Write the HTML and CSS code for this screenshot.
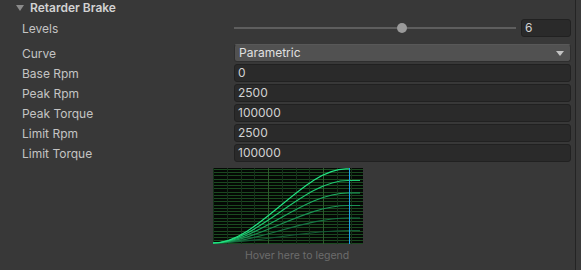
FILE: index.html
```html
<!DOCTYPE html>
<html lang="en">
<head>
    <meta charset="UTF-8">
    <meta name="viewport" content="width=device-width, initial-scale=1.0">
    <title>Retarder Brake</title>
    <link rel="stylesheet" href="styles.css">
</head>
<body>
    <div class="inspector">
        <div class="panel">
            <div class="foldout"><span class="arrow"></span>Retarder Brake</div>

            <div class="row row-levels">
                <label>Levels</label>
                <div class="value">
                    <div class="slider">
                        <div class="track"></div>
                        <div class="thumb"></div>
                    </div>
                    <div class="field num">6</div>
                </div>
            </div>

            <div class="row row-curve">
                <label>Curve</label>
                <div class="value">
                    <div class="dropdown">Parametric<span class="caret"></span></div>
                </div>
            </div>

            <div class="fields">
                <div class="row"><label>Base Rpm</label><div class="value"><div class="field">0</div></div></div>
                <div class="row"><label>Peak Rpm</label><div class="value"><div class="field">2500</div></div></div>
                <div class="row"><label>Peak Torque</label><div class="value"><div class="field">100000</div></div></div>
                <div class="row"><label>Limit Rpm</label><div class="value"><div class="field">2500</div></div></div>
                <div class="row"><label>Limit Torque</label><div class="value"><div class="field">100000</div></div></div>
            </div>

            <div class="graph-wrap">
                <svg class="graph" width="150" height="76" viewBox="0 0 150 76">
                    <rect width="150" height="76" fill="#050805"/>
                    <!-- torque grid -->
                    <g stroke="#1b4a20" stroke-width="1">
                        <path d="M0 1.5H150M0 4.5H150M0 7.5H150M0 11.5H150M0 14.5H150M0 17.5H150M0 20.5H150M0 24.5H150M0 27.5H150M0 30.5H150M0 33.5H150M0 37.5H150M0 40.5H150M0 43.5H150M0 46.5H150M0 50.5H150M0 53.5H150M0 56.5H150M0 59.5H150M0 63.5H150M0 66.5H150M0 69.5H150M0 72.5H150M0 75.5H150"/>
                    </g>
                    <!-- rpm grid -->
                    <g stroke="#16301a" stroke-width="1">
                        <path d="M0.5 0V76M14.5 0V76M28.5 0V76M41.5 0V76M69.5 0V76M83.5 0V76M96.5 0V76M124.5 0V76M138.5 0V76"/>
                    </g>
                    <g stroke="#2d5a2c" stroke-width="1">
                        <path d="M55.5 0V76M110.5 0V76"/>
                    </g>
                    <!-- one curve per level -->
                    <g fill="none" stroke-width="1.2">
                        <path stroke="#145a36" d="M0 75 C45 75 90 62.5 135 62.5 L147 62.5"/>
                        <path stroke="#177444" d="M0 75 C45 75 90 50 135 50 L147 50"/>
                        <path stroke="#1a9153" d="M0 75 C45 75 90 37.5 135 37.5 L147 37.5"/>
                        <path stroke="#1cad62" d="M0 75 C45 75 90 25 135 25 L147 25"/>
                        <path stroke="#1ecb72" d="M0 75 C45 75 90 12.5 135 12.5 L147 12.5"/>
                        <path stroke="#22e584" d="M0 75 C45 75 90 0.8 133 0.8 L136 0.8"/>
                    </g>
                    <path d="M136.5 0V76" stroke="#1e9ee8" stroke-width="1"/>
                </svg>
                <div class="caption">Hover here to legend</div>
            </div>
        </div>
        <div class="scrollbar"></div>
    </div>
</body>
</html>
```

FILE: styles.css
```css
html, body {
    margin: 0;
    padding: 0;
    background-color: #383838;
}
body {
    font-family: Inter, "Noto Sans", sans-serif;
    font-size: 12px;
    color: #c4c4c4;
    height: 270px;
    overflow: hidden;
}
.inspector {
    display: flex;
    height: 270px;
}
.panel {
    flex: 1;
    padding: 0 4px 0 22px;
}
.scrollbar {
    width: 5px;
    background-color: #3a3a3a;
    border-left: 1px solid #242424;
}
.foldout {
    height: 16px;
    line-height: 16px;
    font-weight: 600;
    color: #d2d2d2;
    display: flex;
    align-items: center;
}
.arrow {
    width: 0;
    height: 0;
    margin-left: -6px;
    margin-right: 6px;
    border-left: 4px solid transparent;
    border-right: 4px solid transparent;
    border-top: 6px solid #8a8a8a;
}
.row {
    display: flex;
    align-items: center;
    height: 18px;
}
.row label {
    width: 212px;
    flex-shrink: 0;
}
.value {
    flex: 1;
    display: flex;
    align-items: center;
    height: 100%;
}
.row-levels {
    margin-top: 3px;
}
.row-curve {
    margin-top: 7px;
}
.fields {
    display: flex;
    flex-direction: column;
    gap: 2px;
    margin-top: 2px;
}
.slider {
    flex: 1;
    position: relative;
    height: 18px;
    display: flex;
    align-items: center;
    margin-right: 5px;
}
.track {
    width: 100%;
    height: 2px;
    background-color: #5e5e5e;
}
.thumb {
    position: absolute;
    left: 59.4%;
    top: 4px;
    width: 10px;
    height: 10px;
    margin-left: -5px;
    border-radius: 50%;
    background-color: #9a9a9a;
}
.field {
    flex: 1;
    box-sizing: border-box;
    height: 18px;
    line-height: 16px;
    padding-left: 3px;
    background-color: #2a2a2a;
    border: 1px solid #212121;
    border-radius: 3px;
    color: #d2d2d2;
}
.field.num {
    flex: 0 0 50px;
}
.dropdown {
    flex: 1;
    box-sizing: border-box;
    height: 18px;
    line-height: 16px;
    padding-left: 4px;
    background-color: #515151;
    border: 1px solid #2e2e2e;
    border-top-color: #585858;
    border-radius: 3px;
    color: #e0e0e0;
    display: flex;
    align-items: center;
    justify-content: space-between;
}
.caret {
    width: 0;
    height: 0;
    margin-right: 6px;
    border-left: 4px solid transparent;
    border-right: 4px solid transparent;
    border-top: 5px solid #c4c4c4;
}
.graph-wrap {
    margin: 6px 0 0 191px;
}
.graph {
    display: block;
}
.caption {
    margin-top: 5px;
    padding-left: 32px;
    font-size: 10.5px;
    color: #6c6c6c;
}
```
